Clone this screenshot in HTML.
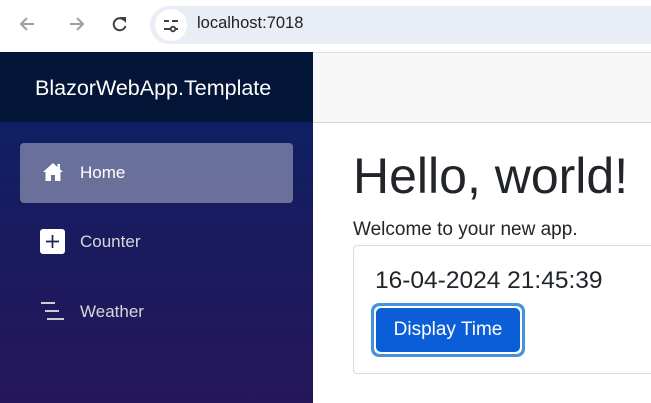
<!DOCTYPE html>
<html><head><meta charset="utf-8"><style>
*{margin:0;padding:0;box-sizing:border-box}
body{width:651px;height:403px;overflow:hidden;font-family:"Liberation Sans",sans-serif;background:#fff;position:relative}
.abs{position:absolute}
.pill{left:150px;top:6px;width:520px;height:38px;border-radius:19px;background:#e9edf6}
.side{left:0;top:52px;width:313px;height:351px;background:linear-gradient(180deg,#0a2266 0%,#1c1a5e 60%,#251759 100%)}
.brand{left:0;top:52px;width:313px;height:70px;background:#041638;color:#fff;font-size:21.5px;line-height:72px;padding-left:35px;white-space:nowrap}
.nav{left:20px;width:273px;height:60px;border-radius:4px;color:#d7d7d7;font-size:17px;line-height:60px;padding-left:60px}
.top{left:313px;top:52px;width:338px;height:71px;background:#f7f7f7;border-top:1px solid #e0e0e0;border-bottom:1px solid #d6d5d5}
</style></head><body>
<div class="abs" style="left:0;top:0;width:651px;height:52px;background:#fff"></div>
<svg class="abs" style="left:16px;top:12px" width="120" height="24" viewBox="0 0 120 24">
<path d="M18 12H6M11 6l-6 6 6 6" stroke="#9aa0a6" stroke-width="2" fill="none"/>
<path d="M54 12h12M61 6l6 6-6 6" stroke="#9aa0a6" stroke-width="2" fill="none"/>
<path d="M108 8a6 6 0 1 0 1.5 6" stroke="#3c4043" stroke-width="2" fill="none"/><path d="M104 5h6v6z" fill="#3c4043"/>
</svg>
<div class="abs pill"></div>
<div class="abs" style="left:155px;top:9px;width:32px;height:32px;border-radius:16px;background:#fff"></div>
<svg class="abs" style="left:162px;top:16px" width="18" height="18" viewBox="0 0 18 18"><path d="M2 5h5M10 5h6M2 13h6M14 13h2" stroke="#3c4043" stroke-width="2"/><circle cx="11" cy="13" r="2.3" stroke="#3c4043" stroke-width="1.8" fill="none"/></svg>
<div class="abs" style="left:197px;top:14px;font-size:16.5px;color:#202124">localhost:7018</div>
<div class="abs side"></div>
<div class="abs brand">BlazorWebApp.Template</div>
<div class="abs nav" style="top:143px;background:rgba(255,255,255,0.37);color:#fff">Home</div>
<svg class="abs" style="left:42px;top:161px" width="22" height="22" viewBox="0 0 22 22"><path d="M11 2L1 11h2.5v9h5.5v-6h4v6h5.5v-9H21l-3-2.7V3h-2.5v3.1z" fill="#fff"/></svg>
<div class="abs nav" style="top:212px">Counter</div>
<div class="abs" style="left:40px;top:229px;width:25px;height:25px;background:#fff;border-radius:3px"></div>
<svg class="abs" style="left:40px;top:229px" width="25" height="25"><path d="M12.5 6v13M6 12.5h13" stroke="#1a1f5e" stroke-width="1.7"/></svg>
<div class="abs nav" style="top:282px">Weather</div>
<svg class="abs" style="left:40px;top:301px" width="26" height="22"><path d="M1 2h14M5 10h14M7 18h17" stroke="#e6e6e6" stroke-width="1.8"/></svg>
<div class="abs top"></div>
<div class="abs" style="left:353px;top:147px;font-size:50px;color:#212529;white-space:nowrap">Hello, world!</div>
<div class="abs" style="left:353px;top:219px;font-size:19px;color:#212529;white-space:nowrap">Welcome to your new app.</div>
<div class="abs" style="left:353px;top:245px;width:320px;height:129px;border:1px solid #dcdcdc;border-radius:4px"></div>
<div class="abs" style="left:375px;top:267px;font-size:24.5px;color:#212529;white-space:nowrap">16-04-2024 21:45:39</div>
<div class="abs" style="left:371px;top:303px;width:154px;height:54px;border-radius:8px;background:#4692e0"></div>
<div class="abs" style="left:374px;top:306px;width:148px;height:48px;border-radius:6px;background:#fff"></div>
<div class="abs" style="left:376px;top:308px;width:144px;height:44px;border-radius:5px;background:#0b5ed7;color:#fff;font-size:19px;line-height:44px;text-align:center">Display Time</div>
</body></html>
